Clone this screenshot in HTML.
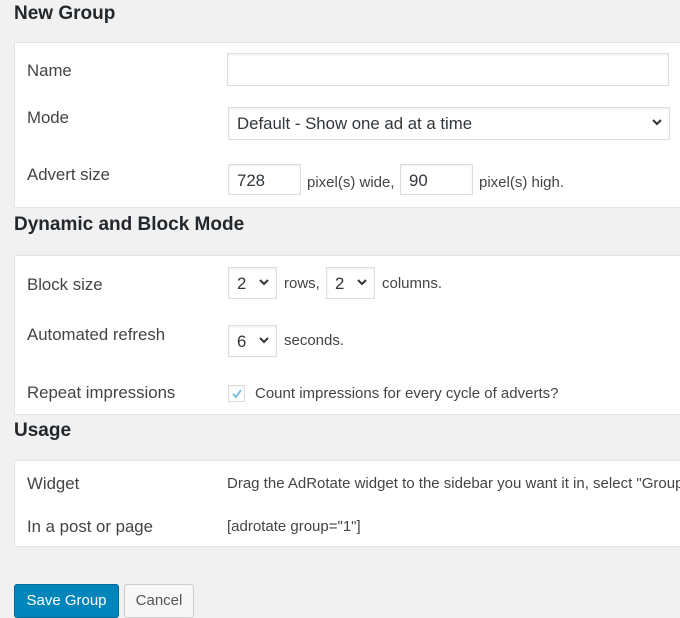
<!DOCTYPE html>
<html><head><style>
body{margin:0;width:680px;height:618px;overflow:hidden;background:#f1f1f1;font-family:"Liberation Sans",sans-serif;color:#444;position:relative}
.a{position:absolute}
h2{position:absolute;margin:0;font-size:19px;font-weight:bold;color:#23282d;left:14px}
.p{position:absolute;left:14px;width:700px;background:#fff;border:1px solid #e2e4e7;box-sizing:border-box}
.l{position:absolute;left:27px;font-size:16.8px;color:#444}
.in{position:absolute;background:#fff;border:1px solid #ddd;box-shadow:inset 0 1px 2px rgba(0,0,0,.07);box-sizing:border-box;font-size:16.8px;color:#32373c;padding-left:8px;line-height:31px}
.t{position:absolute;font-size:15px;color:#444;white-space:nowrap}
.ch{position:absolute;right:6px;top:0}
</style></head><body>
<h2 style="top:3px">New Group</h2>
<div class="p" style="top:42px;height:166px"></div>
<div class="l" style="top:61px">Name</div>
<div class="in" style="left:227px;top:53px;width:442px;height:33px"></div>
<div class="l" style="top:108px">Mode</div>
<div class="in" style="left:228px;top:107px;width:442px;height:33px">Default - Show one ad at a time<svg class="ch" width="12" height="30" viewBox="0 0 12 30"><path d="M2 12l4 4 4-4" fill="none" stroke="#333" stroke-width="2"/></svg></div>
<div class="l" style="top:165px">Advert size</div>
<div class="in" style="left:228px;top:164px;width:73px;height:31px">728</div>
<div class="t" style="left:307px;top:174px">pixel(s) wide,</div>
<div class="in" style="left:400px;top:164px;width:73px;height:31px">90</div>
<div class="t" style="left:479px;top:174px">pixel(s) high.</div>

<h2 style="top:214px">Dynamic and Block Mode</h2>
<div class="p" style="top:255px;height:160px"></div>
<div class="l" style="top:275px">Block size</div>
<div class="in" style="left:228px;top:267px;width:49px;height:32px">2<svg class="ch" width="12" height="30" viewBox="0 0 12 30"><path d="M2 12l4 4 4-4" fill="none" stroke="#333" stroke-width="2"/></svg></div>
<div class="t" style="left:284px;top:275px">rows,</div>
<div class="in" style="left:326px;top:267px;width:49px;height:32px">2<svg class="ch" width="12" height="30" viewBox="0 0 12 30"><path d="M2 12l4 4 4-4" fill="none" stroke="#333" stroke-width="2"/></svg></div>
<div class="t" style="left:382px;top:275px">columns.</div>
<div class="l" style="top:325px">Automated refresh</div>
<div class="in" style="left:228px;top:325px;width:49px;height:32px">6<svg class="ch" width="12" height="30" viewBox="0 0 12 30"><path d="M2 12l4 4 4-4" fill="none" stroke="#333" stroke-width="2"/></svg></div>
<div class="t" style="left:284px;top:332px">seconds.</div>
<div class="l" style="top:383px">Repeat impressions</div>
<div class="in" style="left:228px;top:385px;width:17px;height:17px;padding:0"><svg class="a" style="left:1px;top:1px" width="14" height="14" viewBox="0 0 14 14"><path d="M3 7l3 3 5-7" fill="none" stroke="#7cc0de" stroke-width="2"/></svg></div>
<div class="t" style="left:255px;top:385px">Count impressions for every cycle of adverts?</div>

<h2 style="top:420px">Usage</h2>
<div class="p" style="top:460px;height:87px"></div>
<div class="l" style="top:474px">Widget</div>
<div class="t" style="left:227px;top:475px">Drag the AdRotate widget to the sidebar you want it in, select "Group</div>
<div class="l" style="top:517px">In a post or page</div>
<div class="t" style="left:227px;top:518px">[adrotate group="1"]</div>

<div class="a" style="left:14px;top:584px;width:105px;height:34px;background:#0085ba;border:1px solid #006799;border-radius:3px;box-sizing:border-box;color:#fff;font-size:15px;text-align:center;line-height:32px">Save Group</div>
<div class="a" style="left:124px;top:584px;width:70px;height:34px;background:#f7f7f7;border:1px solid #ccc;border-radius:3px;box-sizing:border-box;color:#555;font-size:15px;text-align:center;line-height:32px">Cancel</div>
</body></html>
